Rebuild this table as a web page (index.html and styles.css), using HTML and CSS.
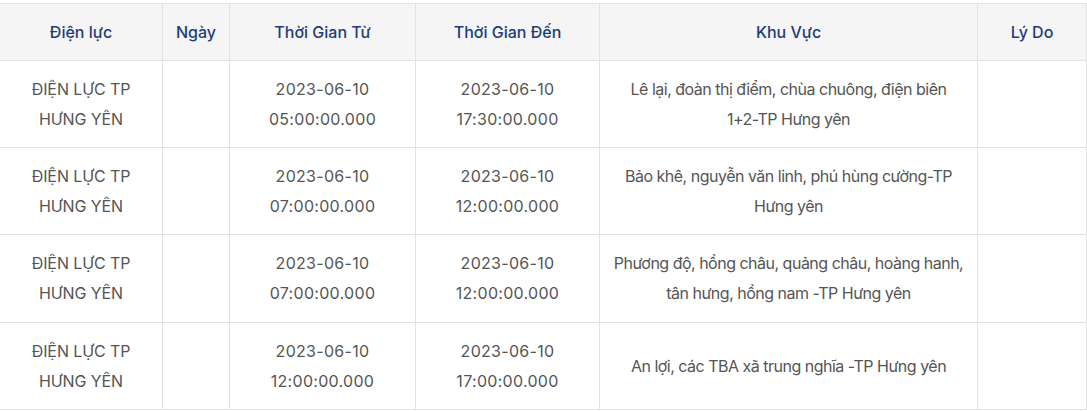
FILE: index.html
```html
<!DOCTYPE html>
<html lang="vi">
<head>
<meta charset="utf-8">
<link rel="stylesheet" href="styles.css">
</head>
<body>
<table class="outage">
  <colgroup>
    <col class="c1"><col class="c2"><col class="c3"><col class="c4"><col class="c5"><col class="c6">
  </colgroup>
  <thead>
    <tr>
      <th>Điện lực</th>
      <th>Ngày</th>
      <th>Thời Gian Từ</th>
      <th>Thời Gian Đến</th>
      <th>Khu Vực</th>
      <th>Lý Do</th>
    </tr>
  </thead>
  <tbody>
    <tr>
      <td class="unit">ĐIỆN LỰC TP HƯNG YÊN</td>
      <td></td>
      <td class="time">2023-06-10 05:00:00.000</td>
      <td class="time">2023-06-10 17:30:00.000</td>
      <td class="area">Lê lại, đoàn thị điểm, chùa chuông, điện biên <span class="nowrap">1+2-TP</span> Hưng yên</td>
      <td></td>
    </tr>
    <tr>
      <td class="unit">ĐIỆN LỰC TP HƯNG YÊN</td>
      <td></td>
      <td class="time">2023-06-10 07:00:00.000</td>
      <td class="time">2023-06-10 12:00:00.000</td>
      <td class="area">Bảo khê, nguyễn văn linh, phú hùng cường-TP Hưng yên</td>
      <td></td>
    </tr>
    <tr>
      <td class="unit">ĐIỆN LỰC TP HƯNG YÊN</td>
      <td></td>
      <td class="time">2023-06-10 07:00:00.000</td>
      <td class="time">2023-06-10 12:00:00.000</td>
      <td class="area">Phương độ, hồng châu, quảng châu, hoàng hanh, tân hưng, hồng nam -TP Hưng yên</td>
      <td></td>
    </tr>
    <tr>
      <td class="unit">ĐIỆN LỰC TP HƯNG YÊN</td>
      <td></td>
      <td class="time">2023-06-10 12:00:00.000</td>
      <td class="time">2023-06-10 17:00:00.000</td>
      <td class="area">An lợi, các TBA xã trung nghĩa -TP Hưng yên</td>
      <td></td>
    </tr>
  </tbody>
</table>
</body>
</html>
```

FILE: styles.css
```css
html, body {
  margin: 0;
  padding: 0;
  background: #ffffff;
}

body {
  padding-top: 3px;
  font-family: Inter, "Noto Sans", sans-serif;
}

.outage {
  border-collapse: collapse;
  table-layout: fixed;
  width: 1087px;
  margin-left: -1px;
}

.c1 { width: 163px; }
.c2 { width: 67px; }
.c3 { width: 186px; }
.c4 { width: 184px; }
.c5 { width: 378px; }
.c6 { width: 109px; }

.outage th,
.outage td {
  border: 1px solid #e2e2e2;
  text-align: center;
  vertical-align: middle;
}

.outage th {
  background: #f5f5f5;
  color: #1e3c78;
  font-size: 16px;
  font-weight: 500;
  height: 56.5px;
  padding: 0 8px;
  box-sizing: border-box;
}

.outage td {
  color: #555555;
  font-size: 16px;
  font-weight: 400;
  line-height: 30px;
  padding: 13px 12px;
  height: 87.4px;
  box-sizing: border-box;
}

.outage td.unit {
  letter-spacing: -0.1px;
}

.outage td.time {
  letter-spacing: 0.3px;
}

.outage td.area {
  letter-spacing: -0.5px;
}

.nowrap {
  white-space: nowrap;
}
```
